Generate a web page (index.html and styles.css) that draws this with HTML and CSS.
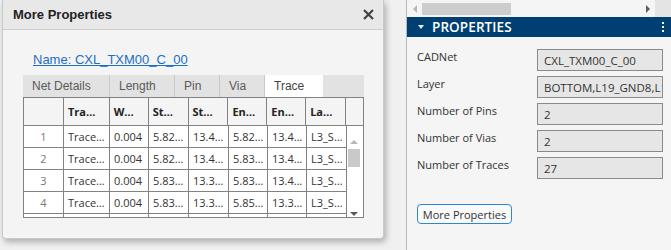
FILE: index.html
```html
<!DOCTYPE html>
<html lang="en">

<head>
    <meta charset="UTF-8">
    <title>Net Properties</title>
    <link rel="stylesheet" href="styles.css">
</head>

<body>
    <div class="app">
        <div class="canvas">
            <div class="dialog">
                <div class="dialog-title">
                    <span>More Properties</span>
                    <svg class="close" width="11" height="11" viewBox="0 0 11 11">
                        <path d="M1 1 L10 10 M10 1 L1 10" stroke="#444" stroke-width="2.2" fill="none" />
                    </svg>
                </div>
                <div class="dialog-body">
                    <a class="net-link" href="#">Name: CXL_TXM00_C_00</a>
                    <div class="tabs">
                        <div class="tab w87">Net Details</div>
                        <div class="tab w65">Length</div>
                        <div class="tab w45">Pin</div>
                        <div class="tab w45">Via</div>
                        <div class="tab w58 active">Trace</div>
                        <div class="tab filler"></div>
                    </div>
                    <div class="grid">
                        <div class="grid-head">
                            <div class="cell c40"></div>
                            <div class="cell c46">Tra…</div>
                            <div class="cell c39">W…</div>
                            <div class="cell c40">St…</div>
                            <div class="cell c40">St…</div>
                            <div class="cell c39">En…</div>
                            <div class="cell c39">En…</div>
                            <div class="cell c40">La…</div>
                            <div class="cell c17"></div>
                        </div>
                        <div class="grid-body">
                            <div class="rows" id="rows"></div>
                            <div class="vscroll">
                                <span class="arrow up"></span>
                                <span class="thumb"></span>
                                <span class="arrow down"></span>
                            </div>
                        </div>
                    </div>
                </div>
            </div>
        </div>

        <div class="panel">
            <div class="hscroll">
                <span class="harrow left"></span>
                <span class="hthumb"></span>
                <span class="harrow right"></span>
                <span class="corner"></span>
            </div>
            <div class="panel-head">
                <span class="caret"></span>
                <span class="panel-title">PROPERTIES</span>
                <span class="kebab"><i></i><i></i><i></i></span>
            </div>
            <div class="props">
                <div class="prop"><label>CADNet</label><div class="field">CXL_TXM00_C_00</div></div>
                <div class="prop"><label>Layer</label><div class="field">BOTTOM,L19_GND8,L1</div></div>
                <div class="prop"><label>Number of Pins</label><div class="field">2</div></div>
                <div class="prop"><label>Number of Vias</label><div class="field">2</div></div>
                <div class="prop"><label>Number of Traces</label><div class="field">27</div></div>
            </div>
            <button class="more-btn">More Properties</button>
        </div>
    </div>

    <script>
        const traces = [
            ["Trace…", "0.004", "5.82…", "13.4…", "5.82…", "13.4…", "L3_S…"],
            ["Trace…", "0.004", "5.82…", "13.4…", "5.83…", "13.4…", "L3_S…"],
            ["Trace…", "0.004", "5.83…", "13.3…", "5.83…", "13.4…", "L3_S…"],
            ["Trace…", "0.004", "5.83…", "13.3…", "5.85…", "13.3…", "L3_S…"],
            ["", "", "", "", "", "", ""]
        ];
        const widths = [46, 39, 40, 40, 39, 39, 40];
        let rows = document.getElementById("rows");
        traces.forEach((t, i) => {
            let row = document.createElement("div");
            row.className = "row";
            let num = document.createElement("div");
            num.className = "cell c40 num";
            num.textContent = t[0] ? i + 1 : "";
            row.appendChild(num);
            t.forEach((v, j) => {
                let c = document.createElement("div");
                c.className = "cell c" + widths[j];
                c.textContent = v;
                row.appendChild(c);
            });
            rows.appendChild(row);
        });
    </script>
</body>

</html>
```

FILE: styles.css
```css
* {
    box-sizing: border-box;
}

body {
    margin: 0;
    background: #f0f0f0;
    font-family: 'Open Sans', sans-serif;
    overflow: hidden;
}

.app {
    display: flex;
    width: 671px;
    height: 250px;
}

/* Left work area with floating dialog */
.canvas {
    width: 407px;
    height: 250px;
    border-right: 1px solid #b9b9b9;
    padding-left: 2px;
}

.dialog {
    width: 382px;
    height: 239px;
    background: #f4f4f4;
    border: 1px solid #c9c9c9;
    border-top: none;
    border-radius: 0 0 4px 4px;
    box-shadow: 2px 3px 6px rgba(0, 0, 0, 0.28);
    font-family: 'Liberation Sans', Arial, sans-serif;
}

.dialog-title {
    height: 30px;
    background: #e8e8e8;
    border-bottom: 1px solid #cfcfcf;
    display: flex;
    align-items: center;
    justify-content: space-between;
    padding: 0 9px 0 10px;
    font-size: 13px;
    font-weight: bold;
    color: #222;
}

.dialog-body {
    padding: 22px 0 0 20px;
}

.net-link {
    display: block;
    margin-left: 10px;
    font-size: 13px;
    line-height: 15px;
    color: #1d6fc2;
}

.tabs {
    display: flex;
    margin-top: 8px;
    width: 341px;
    height: 22px;
    background: #e2e2e2;
}

.tab {
    padding-left: 9px;
    font-size: 12px;
    line-height: 22px;
    color: #5a5a5a;
    border-right: 1px solid #c9c9c9;
}

.tab.active {
    background: #fff;
    color: #444;
    border-right: none;
}

.tab.filler {
    flex: 1;
    border-right: none;
}

.w87 { width: 87px; }
.w65 { width: 65px; }
.w45 { width: 45px; }
.w58 { width: 58px; }

/* Trace table */
.grid {
    width: 341px;
    border: 1px solid #828282;
    font-family: 'Open Sans', sans-serif;
    font-size: 11px;
    color: #333;
}

.grid-head {
    display: flex;
    height: 28px;
    background: #f4f4f4;
    border-bottom: 1px solid #828282;
    font-weight: bold;
    color: #222;
}

.grid-head .cell {
    line-height: 27px;
}

.grid-head .c17 {
    border-right: none;
}

.grid-body {
    display: flex;
    height: 91px;
    overflow: hidden;
}

.rows {
    width: 323px;
}

.row {
    display: flex;
    height: 22px;
    border-bottom: 1px solid #828282;
    background: #fff;
}

.cell {
    padding-left: 4px;
    border-right: 1px solid #828282;
    white-space: nowrap;
    overflow: hidden;
    line-height: 21px;
}

.cell.num {
    text-align: center;
    padding-left: 0;
    color: #777;
}

.c40 { width: 40px; }
.c46 { width: 46px; }
.c39 { width: 39px; }
.c17 { width: 17px; }

.vscroll {
    width: 17px;
    background: #fff;
    position: relative;
}

.thumb {
    position: absolute;
    left: 1px;
    top: 23px;
    width: 12px;
    height: 18px;
    background: #c9c9c9;
}

.arrow {
    position: absolute;
    left: 3px;
    width: 0;
    height: 0;
    border-left: 4px solid transparent;
    border-right: 4px solid transparent;
}

.arrow.up {
    top: 14px;
    border-bottom: 4px solid #b8b8b8;
}

.arrow.down {
    top: 86px;
    border-top: 4px solid #5a5a5a;
}

/* Right properties panel */
.panel {
    flex: 1;
    background: #f5f5f5;
}

.hscroll {
    height: 17px;
    display: flex;
    align-items: center;
    background: #f5f5f5;
    position: relative;
}

.harrow {
    width: 0;
    height: 0;
    border-top: 4px solid transparent;
    border-bottom: 4px solid transparent;
}

.harrow.left {
    margin-left: 6px;
    border-right: 4px solid #b8b8b8;
}

.hthumb {
    margin-left: 5px;
    width: 89px;
    height: 12px;
    background: #cdcdcd;
}

.harrow.right {
    margin-left: 135px;
    border-left: 4px solid #5e5e5e;
}

.corner {
    margin-left: auto;
    width: 16px;
    height: 17px;
    background: #e4e4e4;
}

.panel-head {
    height: 20px;
    background: #003f73;
    display: flex;
    align-items: center;
    padding-left: 11px;
    color: #fff;
}

.caret {
    width: 0;
    height: 0;
    border-left: 3px solid transparent;
    border-right: 3px solid transparent;
    border-top: 4px solid #e6ecf2;
}

.panel-title {
    margin-left: 8px;
    font-size: 13.5px;
    font-weight: 600;
    letter-spacing: 0.1px;
}

.kebab {
    margin-left: auto;
    margin-right: 7px;
    display: flex;
    flex-direction: column;
    gap: 2px;
}

.kebab i {
    width: 2px;
    height: 2px;
    background: #fff;
}

.props {
    padding: 12px 8px 0 10px;
    display: flex;
    flex-direction: column;
    gap: 5px;
}

.prop {
    display: flex;
}

.prop label {
    width: 120px;
    font-size: 11px;
    line-height: 16px;
    color: #333;
}

.field {
    width: 126px;
    height: 22px;
    background: #e6e6e6;
    border: 1px solid #8a8a8a;
    padding: 0 6px;
    font-size: 11.5px;
    line-height: 22px;
    color: #333;
    white-space: nowrap;
    overflow: hidden;
}

.more-btn {
    margin: 25px 0 0 10px;
    width: 95px;
    height: 20px;
    padding: 0;
    background: #fafafa;
    border: 1px solid #2c86d8;
    border-radius: 4px;
    font-family: 'Open Sans', sans-serif;
    font-size: 11px;
    color: #333;
}
```
